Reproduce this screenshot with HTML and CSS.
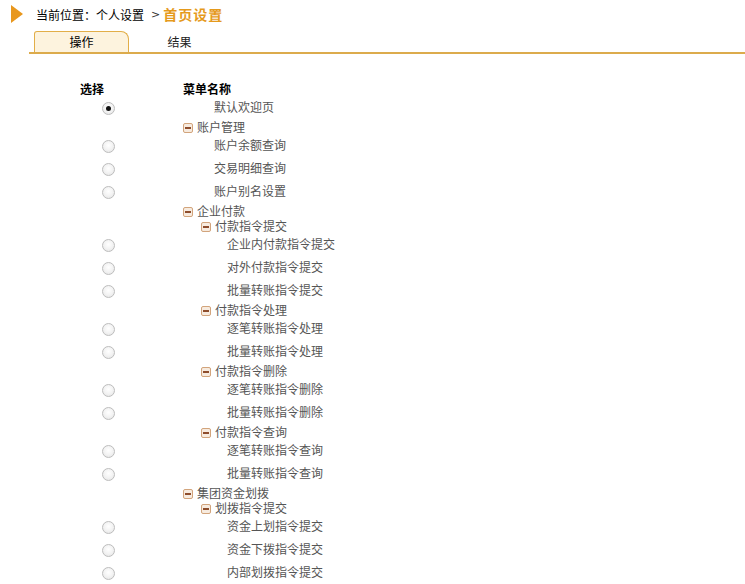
FILE: index.html
```html
<!DOCTYPE html>
<html lang="zh-CN">
<head>
    <meta charset="UTF-8">
    <title>首页设置</title>
    <link rel="stylesheet" href="styles.css">
</head>
<body>
    <div class="location">
        <span class="arrow"></span>
        <span class="loc-text">当前位置：个人设置</span>
        <span class="loc-sep">&gt;</span>
        <span class="loc-title">首页设置</span>
    </div>

    <div class="tabs">
        <div class="tab active">操作</div>
        <div class="tab">结果</div>
    </div>

    <div class="menu">
        <div class="row head">
            <div class="col-sel">选择</div>
            <div class="col-name">菜单名称</div>
        </div>

        <div class="row item">
            <div class="col-sel"><span class="radio checked"></span></div>
            <div class="col-name lv1-leaf">默认欢迎页</div>
        </div>
        <div class="row group">
            <div class="col-sel"></div>
            <div class="col-name lv1"><span class="minus"></span>账户管理</div>
        </div>
        <div class="row item">
            <div class="col-sel"><span class="radio"></span></div>
            <div class="col-name lv1-leaf">账户余额查询</div>
        </div>
        <div class="row item">
            <div class="col-sel"><span class="radio"></span></div>
            <div class="col-name lv1-leaf">交易明细查询</div>
        </div>
        <div class="row item">
            <div class="col-sel"><span class="radio"></span></div>
            <div class="col-name lv1-leaf">账户别名设置</div>
        </div>

        <div class="row group">
            <div class="col-sel"></div>
            <div class="col-name lv1"><span class="minus"></span>企业付款</div>
        </div>
        <div class="row group">
            <div class="col-sel"></div>
            <div class="col-name lv2"><span class="minus"></span>付款指令提交</div>
        </div>
        <div class="row item">
            <div class="col-sel"><span class="radio"></span></div>
            <div class="col-name lv2-leaf">企业内付款指令提交</div>
        </div>
        <div class="row item">
            <div class="col-sel"><span class="radio"></span></div>
            <div class="col-name lv2-leaf">对外付款指令提交</div>
        </div>
        <div class="row item">
            <div class="col-sel"><span class="radio"></span></div>
            <div class="col-name lv2-leaf">批量转账指令提交</div>
        </div>
        <div class="row group">
            <div class="col-sel"></div>
            <div class="col-name lv2"><span class="minus"></span>付款指令处理</div>
        </div>
        <div class="row item">
            <div class="col-sel"><span class="radio"></span></div>
            <div class="col-name lv2-leaf">逐笔转账指令处理</div>
        </div>
        <div class="row item">
            <div class="col-sel"><span class="radio"></span></div>
            <div class="col-name lv2-leaf">批量转账指令处理</div>
        </div>
        <div class="row group">
            <div class="col-sel"></div>
            <div class="col-name lv2"><span class="minus"></span>付款指令删除</div>
        </div>
        <div class="row item">
            <div class="col-sel"><span class="radio"></span></div>
            <div class="col-name lv2-leaf">逐笔转账指令删除</div>
        </div>
        <div class="row item">
            <div class="col-sel"><span class="radio"></span></div>
            <div class="col-name lv2-leaf">批量转账指令删除</div>
        </div>
        <div class="row group">
            <div class="col-sel"></div>
            <div class="col-name lv2"><span class="minus"></span>付款指令查询</div>
        </div>
        <div class="row item">
            <div class="col-sel"><span class="radio"></span></div>
            <div class="col-name lv2-leaf">逐笔转账指令查询</div>
        </div>
        <div class="row item">
            <div class="col-sel"><span class="radio"></span></div>
            <div class="col-name lv2-leaf">批量转账指令查询</div>
        </div>

        <div class="row group">
            <div class="col-sel"></div>
            <div class="col-name lv1"><span class="minus"></span>集团资金划拨</div>
        </div>
        <div class="row group">
            <div class="col-sel"></div>
            <div class="col-name lv2"><span class="minus"></span>划拨指令提交</div>
        </div>
        <div class="row item">
            <div class="col-sel"><span class="radio"></span></div>
            <div class="col-name lv2-leaf">资金上划指令提交</div>
        </div>
        <div class="row item">
            <div class="col-sel"><span class="radio"></span></div>
            <div class="col-name lv2-leaf">资金下拨指令提交</div>
        </div>
        <div class="row item">
            <div class="col-sel"><span class="radio"></span></div>
            <div class="col-name lv2-leaf">内部划拨指令提交</div>
        </div>
    </div>
</body>
</html>
```

FILE: styles.css
```css
body{
    margin: 0;
    background-color: #fff;
    color: #000;
    font-family: "Noto Sans CJK SC", "DejaVu Sans", sans-serif;
    font-size: 12px;
    overflow: hidden;
}

/* top location bar */
.location{
    display: flex;
    align-items: center;
    height: 28px;
    padding-left: 11px;
}
.arrow{
    width: 0;
    height: 0;
    border-top: 9px solid transparent;
    border-bottom: 9px solid transparent;
    border-left: 12px solid #e8971d;
    margin-right: 13px;
}
.loc-text{
    color: #000;
}
.loc-sep{
    color: #333;
    margin: 0 3px 0 7px;
    font-family: "DejaVu Sans", sans-serif;
    font-size: 11px;
}
.loc-title{
    color: #e59a1c;
    font-size: 14px;
    font-weight: bold;
    letter-spacing: 1px;
}

/* tabs */
.tabs{
    display: flex;
    align-items: flex-end;
    margin-top: 3px;
    margin-left: 29px;
    padding-left: 5px;
    height: 21px;
    border-bottom: 2px solid #dcab4c;
}
.tab{
    width: 95px;
    height: 21px;
    line-height: 21px;
    text-align: center;
    color: #222;
    box-sizing: border-box;
}
.tab.active{
    background-color: #fdf3de;
    border: 1px solid #e2ae48;
    border-bottom: none;
    border-radius: 3px 8px 0 0;
    color: #000;
    line-height: 20px;
}
.tab + .tab{
    margin-left: 3px;
}

/* menu tree */
.menu{
    margin-top: 28px;
}
.row{
    display: grid;
    grid-template-columns: 183px 1fr;
    align-items: center;
}
.row.head{
    height: 15px;
    font-weight: bold;
    color: #000;
}
.row.head .col-sel{
    padding-left: 80px;
}
.row.item{
    height: 23px;
}
.row.group{
    height: 15px;
}
.col-sel{
    display: flex;
    align-items: center;
    padding-left: 102px;
}
.row.head .col-sel,
.col-name{
    line-height: 14px;
    padding-bottom: 3px;
}
.col-name{
    display: flex;
    align-items: center;
    color: #555;
    white-space: nowrap;
}
.row.head .col-name{
    color: #000;
}
.lv1{
    padding-left: 0;
}
.lv2{
    padding-left: 18px;
}
.lv1-leaf{
    padding-left: 31px;
}
.lv2-leaf{
    padding-left: 44px;
}

.radio{
    position: relative;
    display: inline-block;
    width: 11px;
    height: 11px;
    border: 1px solid #bdbdbd;
    border-radius: 50%;
    background: radial-gradient(circle at 50% 40%, #ffffff 0%, #f3f3f3 50%, #e2e2e2 100%);
}
.radio.checked::after{
    content: "";
    position: absolute;
    left: 3px;
    top: 3px;
    width: 5px;
    height: 5px;
    border-radius: 50%;
    background-color: #111;
}

.minus{
    position: relative;
    display: inline-block;
    width: 8px;
    height: 8px;
    border: 1px solid #d2a47c;
    border-radius: 2px;
    background-color: #f7ebdf;
    margin-right: 4px;
    margin-top: 2px;
}
.minus::after{
    content: "";
    position: absolute;
    left: 1px;
    top: 3px;
    width: 6px;
    height: 2px;
    background-color: #8e4d2c;
}
```
